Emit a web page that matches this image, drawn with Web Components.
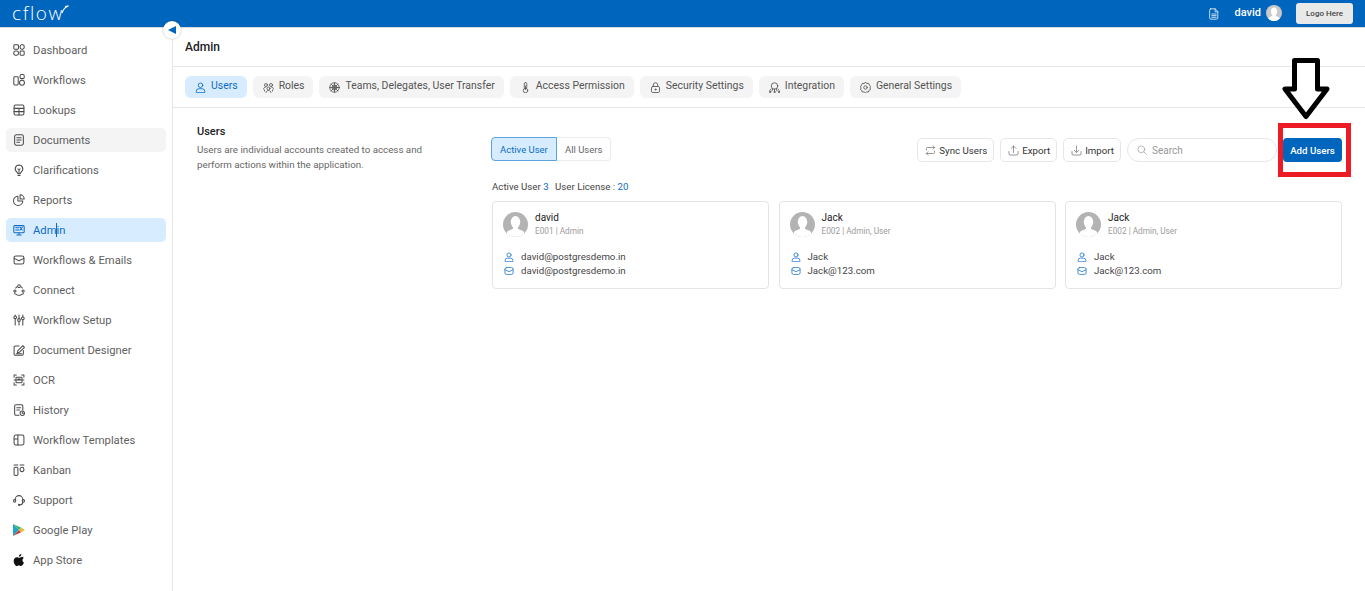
<!DOCTYPE html>
<html>
<head>
<meta charset="utf-8">
<title>Admin</title>
<style>
  html, body { margin: 0; height: 100%; background: #fff; overflow: hidden; }
  body { font-family: Roboto, "Liberation Sans", sans-serif; color: #333; }
</style>
</head>
<body>
<app-shell></app-shell>

<script>
// stroke icons on a 24 box, keyed by name
const ICONS = {
  dashboard: '<rect x="2.500" y="2.500" width="8.500" height="8" rx="1.500"/><rect x="14" y="2.500" width="7.500" height="8" rx="3"/><rect x="2.500" y="14" width="8.500" height="7.500" rx="3"/><rect x="14" y="14" width="7.500" height="7.500" rx="1.500"/>',
  workflows: '<rect x="2.500" y="6" width="8" height="15" rx="1.500"/><rect x="14" y="2" width="7.500" height="7.500" rx="2"/><circle cx="17.500" cy="17" r="4.500"/>',
  lookups: '<rect x="3" y="3" width="18" height="18" rx="2.500"/><path d="M3 9h18M3 15h18M12 9v12"/>',
  documents: '<rect x="4" y="2.500" width="16" height="19" rx="3"/><path d="M8 8h8M8 12h8M8 16h5"/>',
  clarifications: '<path d="M12 3a7 7 0 0 0-4 12.700L10 19h4l2-3.300A7 7 0 0 0 12 3z"/><path d="M10 22h4M12 19v-7l-2-2M12 12l2-2"/>',
  reports: '<path d="M10 5a8.500 8.500 0 1 0 9 9h-9z"/><path d="M14 2.500a7.500 7.500 0 0 1 7.500 7.500H14z"/>',
  admin: '<rect x="2.500" y="4" width="19" height="13" rx="2"/><path d="M8 21h8M12 17v4M6 8h6M6 12h6"/><path d="M14 7l4 5M18 7l-4 5"/>',
  mail: '<rect x="3" y="4.500" width="18" height="15" rx="3.500"/><path d="M3 9l9 4.500L21 9"/>',
  connect: '<circle cx="12" cy="5" r="2.500"/><circle cx="4.500" cy="14" r="2"/><circle cx="19.500" cy="14" r="2"/><path d="M6 8.500A8 8 0 0 1 8 6M18 8.500A8 8 0 0 0 16 6M7 20a8 8 0 0 0 10 0M4 18l1 1.500M20 18l-1 1.500" stroke-dasharray="3 1.500"/>',
  setup: '<path d="M5 10v11M5 3v1M12 15v6M12 3v6M19 12v9M19 3v3"/><circle cx="5" cy="7" r="2.500"/><circle cx="12" cy="12" r="2.500"/><circle cx="19" cy="9" r="2.500"/>',
  designer: '<path d="M20 13v6a2.500 2.500 0 0 1-2.500 2.500h-12A2.500 2.500 0 0 1 3 19V7a2.500 2.500 0 0 1 2.500-2.500H12"/><path d="M9 17l1-4 9-9 3 3-9 9zM7 19h10"/>',
  ocr: '<path d="M3 7V3h4M17 3h4v4M21 17v4h-4M7 21H3v-4"/><rect x="6.500" y="7" width="11" height="10" rx="1.500"/><path d="M3 12h18M10 10h4"/>',
  history: '<path d="M12 21.500H6.500A2.500 2.500 0 0 1 4 19V5a2.500 2.500 0 0 1 2.500-2.500h10A2.500 2.500 0 0 1 19 5v7"/><path d="M8 8h7M8 12h5"/><circle cx="18" cy="18" r="4"/><path d="M18 16v2h2"/>',
  templates: '<rect x="3" y="3" width="18" height="18" rx="3"/><path d="M10 3v18M3 10h7"/>',
  kanban: '<rect x="3" y="7" width="7" height="15" rx="2"/><path d="M3 3h7M14 3h7"/><rect x="14" y="7" width="7" height="8" rx="3.500"/>',
  support: '<path d="M5 13V11a7 7 0 0 1 14 0v2"/><rect x="2" y="11" width="4" height="5" rx="2"/><rect x="18" y="11" width="4" height="5" rx="2"/><path d="M19 16a7 5 0 0 1-6 5"/><circle cx="12" cy="21" r="1"/>',
  user: '<circle cx="12" cy="7.500" r="4.500"/><path d="M3.500 21.500v-2a5 5 0 0 1 5-5h7a5 5 0 0 1 5 5v2z"/>',
  roles: '<circle cx="7" cy="7" r="3"/><circle cx="17" cy="7" r="3"/><circle cx="12" cy="14" r="3"/><path d="M2 15c0-2 2-4 4-4M22 15c0-2-2-4-4-4M7 22c0-2 2-4 5-4s5 2 5 4M4 17v2M20 17v2"/>',
  teams: '<circle cx="12" cy="12" r="9.500"/><circle cx="12" cy="12" r="5"/><path d="M12 2.500v19M2.500 12h19M5 5l14 14M19 5L5 19"/>',
  key: '<rect x="9.500" y="2" width="5" height="12" rx="2.500"/><circle cx="12" cy="18" r="4.500"/><path d="M12 9v7"/>',
  lock: '<rect x="4" y="10" width="16" height="12" rx="2.500"/><path d="M7.500 10V7a4.500 4.500 0 0 1 9 0v3"/><circle cx="12" cy="16" r="1.200"/>',
  integration: '<circle cx="12" cy="9" r="6.500"/><path d="M5 15c-2 1-2.500 3-2.500 4M19 15c2 1 2.500 3 2.500 4M12 15v4M8 15l-1 4M16 15l1 4"/><circle cx="3" cy="21" r="1.300"/><circle cx="21" cy="21" r="1.300"/><circle cx="12" cy="21" r="1.300"/>',
  gear: '<path d="M12 2l3 2 3.500-.3 1 3.300L22 9.500 21 13l1 3-3 1.700-1 3.300-3.500-.3-2.500 2-3-2-3.500.3-1-3.300L2 16l1-3-1-3.500L4.500 7l1-3.300L9 4z"/><circle cx="12" cy="12" r="3.500"/>',
  sync: '<path d="M4 11V8a2 2 0 0 1 2-2h14M17 2.500L20.500 6 17 9.500M20 13v3a2 2 0 0 1-2 2H4M7 14.500L3.500 18 7 21.500"/>',
  upload: '<path d="M12 16V3M7.500 7.500L12 3l4.500 4.500M3 14v5a2 2 0 0 0 2 2h14a2 2 0 0 0 2-2v-5"/>',
  download: '<path d="M12 3v13M7.500 11.500L12 16l4.500-4.500M3 14v5a2 2 0 0 0 2 2h14a2 2 0 0 0 2-2v-5"/>',
  search: '<circle cx="10.500" cy="10.500" r="7.500"/><path d="M16 16l6 6"/>',
  file: '<path d="M6 2.500h8l5 5V19a2.500 2.500 0 0 1-2.500 2.500h-10A2.500 2.500 0 0 1 4 19V5a2.500 2.500 0 0 1 2-2.500z"/><path d="M14 2.500V8h5M8 12h8M8 15h8M8 18h8"/>'
};

class UiIcon extends HTMLElement {
  connectedCallback() {
    const size = this.getAttribute("size") || 12;
    const width = this.getAttribute("stroke") || 1.9;
    this.attachShadow({ mode: "open" }).innerHTML = `
      <style>
        :host { display: inline-flex; flex: none; width: ${size}px; height: ${size}px; }
        svg { width: 100%; height: 100%; display: block; fill: none; stroke: currentColor;
              stroke-width: ${width}; stroke-linecap: round; stroke-linejoin: round; }
      </style>
      <svg viewBox="1 1 22 22">${ICONS[this.getAttribute("name")] || ""}</svg>`;
  }
}
customElements.define("ui-icon", UiIcon);

class AvatarPic extends HTMLElement {
  connectedCallback() {
    const size = this.getAttribute("size") || 25;
    this.attachShadow({ mode: "open" }).innerHTML = `
      <style>
        :host { display: block; flex: none; width: ${size}px; height: ${size}px; }
        svg { display: block; width: 100%; height: 100%; }
      </style>
      <svg viewBox="0 0 50 50">
        <defs><clipPath id="c"><circle cx="25" cy="25" r="25"/></clipPath></defs>
        <circle cx="25" cy="25" r="25" fill="${this.getAttribute("bg") || "#b3b3b3"}"/>
        <g clip-path="url(#c)" fill="#fff">
          <ellipse cx="25" cy="20" rx="9.500" ry="12"/>
          <path d="M20 29h10v4c0 2 9 3 12 7v10H8V40c3-4 12-5 12-7z"/>
        </g>
      </svg>`;
  }
}
customElements.define("avatar-pic", AvatarPic);

class TopBar extends HTMLElement {
  connectedCallback() {
    this.attachShadow({ mode: "open" }).innerHTML = `
      <style>
        :host { display: flex; align-items: center; height: 27px; background: #0065bd; color: #fff;
                padding-left: 12px; border-bottom: 1px solid #d9d9d9; }
        .logo { font: 300 19px/27px "Open Sans", Roboto, sans-serif; letter-spacing: 1.600px;
                height: 27px; position: relative; width: 57px; margin-top: -1px; }
        .right { margin-left: auto; display: flex; align-items: center; padding-right: 12px; }
        .name { font-size: 11px; font-weight: 500; margin: -3px 0 0 14px; }
        avatar-pic { margin-left: 5px; margin-top: -1px; }
        .logo-box { width: 57px; height: 21px; margin-left: 14px; background: #e9e9e9; border-radius: 3px;
                    color: #444; font-size: 8px; font-weight: 500; display: flex; align-items: center; justify-content: center; }
        .flick { position: absolute; left: 42px; top: 4px; width: 15px; height: 10px; }
      </style>
      <div class="logo">cflow
        <svg class="flick" viewBox="0 0 15 10"><path d="M8 9C9 6 11 3 14.500 2L11 2.500" fill="none" stroke="#fff" stroke-width="1.100"/></svg>
      </div>
      <div class="right">
        <ui-icon name="file" size="12" stroke="1.400"></ui-icon>
        <span class="name">david</span>
        <avatar-pic size="16" bg="#c9c9c9"></avatar-pic>
        <div class="logo-box">Logo Here</div>
      </div>`;
  }
}
customElements.define("top-bar", TopBar);

class NavItem extends HTMLElement {
  connectedCallback() {
    const icon = this.getAttribute("icon");
    this.attachShadow({ mode: "open" }).innerHTML = `
      <style>
        :host { display: flex; align-items: center; height: 24px; padding-left: 7px; border-radius: 5px;
                color: #5f5f5f; font-size: 11.250px; gap: 8px; }
        :host([hover]) { background: #f4f4f4; }
        :host([active]) { background: #d8ecff; color: #0a6cc4; }
        .ic { display: inline-flex; width: 12px; height: 12px; color: #4a4a4a; flex: none; }
        :host([active]) .ic { color: #0a6cc4; }
      </style>
      <span class="ic"><slot name="glyph">${icon ? `<ui-icon name="${icon}" size="12"></ui-icon>` : ""}</slot></span>
      <span><slot></slot></span>`;
  }
}
customElements.define("nav-item", NavItem);

class SideBar extends HTMLElement {
  connectedCallback() {
    const items = [
      ["dashboard", "Dashboard"], ["workflows", "Workflows"], ["lookups", "Lookups"],
      ["documents", "Documents", "hover"], ["clarifications", "Clarifications"], ["reports", "Reports"],
      ["admin", 'Adm<i class="caret"></i>in', "active"], ["mail", "Workflows &amp; Emails"], ["connect", "Connect"],
      ["setup", "Workflow Setup"], ["designer", "Document Designer"], ["ocr", "OCR"],
      ["history", "History"], ["templates", "Workflow Templates"], ["kanban", "Kanban"], ["support", "Support"]
    ];
    const rows = items.map(([i, t, s]) => `<nav-item icon="${i}" ${s || ""}>${t}</nav-item>`).join("");
    this.attachShadow({ mode: "open" }).innerHTML = `
      <style>
        :host { display: flex; flex-direction: column; gap: 6px; width: 160px; padding: 10px 6px 0;
                border-right: 1px solid #e6e6e6; flex: none; position: relative; box-sizing: content-box; }
        .toggle { position: absolute; right: -9px; top: -7px; width: 18px; height: 18px; border-radius: 50%;
                  background: #fff; box-shadow: 0 0 2px rgba(0,0,0,.3); display: flex; align-items: center; justify-content: center; }
        .toggle i { width: 0; height: 0; border: 4px solid transparent; border-right: 8px solid #0065bd; border-left: 0; }
        .caret { display: inline-block; width: 1px; height: 14px; background: #0a6cc4; margin: 0 -.5px; vertical-align: -3px; }
      </style>
      <div class="toggle"><i></i></div>
      ${rows}
      <nav-item>Google Play
        <svg slot="glyph" viewBox="0 0 12 12" width="12" height="12">
          <path d="M0 0v12l6-6z" fill="#1fa3c9"/><path d="M0 0l6 6 2.300-2.300z" fill="#3bb273"/>
          <path d="M0 12l6-6 2.300 2.300z" fill="#c4423c"/><path d="M8.300 3.700L12 6 8.300 8.300 6 6z" fill="#e8b93a"/>
        </svg>
      </nav-item>
      <nav-item>App Store
        <svg slot="glyph" viewBox="0 0 12 12" width="12" height="12">
          <path fill="#111" d="M8.500 3.200c-1 0-1.700.6-2.400.6s-1.300-.6-2.300-.6C2.300 3.200.7 4.500.7 7c0 2.300 1.600 5 3 5 .8 0 1.200-.5 2.200-.5s1.300.5 2.200.5c1.200 0 2.300-1.800 2.900-3.400-1.700-.7-2.200-3.300-.2-4.500-.6-.9-1.400-1.400-2.300-1.400zM8.300 0C7 .1 5.800 1.300 6 2.800 7.300 2.800 8.500 1.500 8.300 0z"/>
        </svg>
      </nav-item>`;
  }
}
customElements.define("side-bar", SideBar);

class TabChip extends HTMLElement {
  connectedCallback() {
    this.attachShadow({ mode: "open" }).innerHTML = `
      <style>
        :host { display: flex; align-items: center; height: 22px; padding: 0 9px 0 10px; gap: 5px; border-radius: 6px;
                background: #f4f4f4; color: #555; font-size: 10.450px; white-space: nowrap; }
        :host([active]) { background: #d8ecff; color: #0a6cc4; }
        span { margin-top: -3px; }
      </style>
      <ui-icon name="${this.getAttribute("icon")}" size="11" stroke="1.700"></ui-icon>
      <span><slot></slot></span>`;
  }
}
customElements.define("tab-chip", TabChip);

class ToolButton extends HTMLElement {
  connectedCallback() {
    this.attachShadow({ mode: "open" }).innerHTML = `
      <style>
        :host { display: flex; align-items: center; height: 22px; padding: 0 6px 0 7px; gap: 3px; border: 1px solid #e6e6e6;
                border-radius: 5px; background: #fff; color: #333; font-size: 9.700px; white-space: nowrap; }
        ui-icon { color: #777; }
      </style>
      <ui-icon name="${this.getAttribute("icon")}" size="11" stroke="1.500"></ui-icon>
      <span><slot></slot></span>`;
  }
}
customElements.define("tool-button", ToolButton);

class UserCard extends HTMLElement {
  connectedCallback() {
    const a = n => this.getAttribute(n);
    this.attachShadow({ mode: "open" }).innerHTML = `
      <style>
        :host { display: block; box-sizing: border-box; height: 88px; border: 1px solid #e4e4e4; border-radius: 4px;
                padding: 10px 10px 0; background: #fff; }
        .head { display: flex; gap: 7px; }
        .name { font-size: 10px; color: #222; line-height: 12px; }
        .sub { font-size: 8.250px; color: #9c9c9c; line-height: 10px; margin-top: 2px; }
        .rows { margin-top: 14px; display: flex; flex-direction: column; gap: 2px; }
        .row { display: flex; align-items: center; gap: 7px; font-size: 9.700px; color: #444; line-height: 12px; padding-left: 1px; }
        ui-icon { color: #2f80cf; }
      </style>
      <div class="head">
        <avatar-pic size="25"></avatar-pic>
        <div><div class="name">${a("name")}</div><div class="sub">${a("sub")}</div></div>
      </div>
      <div class="rows">
        <div class="row"><ui-icon name="user" size="10"></ui-icon>${a("login")}</div>
        <div class="row"><ui-icon name="mail" size="10"></ui-icon>${a("mail")}</div>
      </div>`;
  }
}
customElements.define("user-card", UserCard);

class UsersPanel extends HTMLElement {
  connectedCallback() {
    this.attachShadow({ mode: "open" }).innerHTML = `
      <style>
        :host { display: grid; grid-template-columns: 295px 1fr; padding: 17px 23px 0 24px; }
        h3 { margin: 0; font-size: 11px; font-weight: 500; color: #222; line-height: 14px; }
        p { margin: 3px 0 0; font-size: 9.750px; line-height: 15px; color: #666; width: 240px; }
        .side { padding-top: 13px; }
        .bar { display: flex; align-items: flex-start; height: 24px; }
        .seg { display: flex; height: 24px; font-size: 9.500px; margin-left: -1px; margin-top: -1px; }
        .seg div { display: flex; align-items: center; box-sizing: border-box; height: 24px; padding: 0 7px 0 8px; border: 1px solid #ececec; }
        .seg .on { width: 66px; background: #d8ecff; color: #0a6cc4; border-color: #5aa2e0; border-radius: 4px 0 0 4px; }
        .seg .off { width: 54px; color: #666; border-left: 0; border-radius: 0 4px 4px 0; }
        .tools { margin-left: auto; display: flex; align-items: center; gap: 6px; }
        .search { display: flex; align-items: center; gap: 5px; box-sizing: border-box; width: 150px; height: 24px; padding-left: 9px;
                  border: 1px solid #e6e6e6; border-radius: 12px; color: #999; font-size: 10px; }
        .add { display: flex; align-items: center; justify-content: center; width: 59px; height: 24px; border-radius: 4px;
               background: #0065bd; color: #fff; font-size: 9.700px; font-weight: 500; }
        .count { margin-top: 19px; font-size: 9.700px; line-height: 12px; color: #444; }
        .count b { font-weight: 400; color: #0a6cc4; }
        .count span { margin-left: 4px; }
        .cards { display: grid; grid-template-columns: repeat(3, 1fr); gap: 9.500px; margin-top: 8px; }
      </style>
      <div>
        <h3>Users</h3>
        <p>Users are individual accounts created to access and perform actions within the application.</p>
      </div>
      <div class="side">
        <div class="bar">
          <div class="seg"><div class="on">Active User</div><div class="off">All Users</div></div>
          <div class="tools">
            <tool-button icon="sync">Sync Users</tool-button>
            <tool-button icon="upload">Export</tool-button>
            <tool-button icon="download">Import</tool-button>
            <div class="search"><ui-icon name="search" size="10" stroke="1.500"></ui-icon>Search</div>
            <div class="add">Add Users</div>
          </div>
        </div>
        <div class="count">Active User <b>3</b> <span>User License : <b>20</b></span></div>
        <div class="cards">
          <user-card name="david" sub="E001 | Admin" login="david@postgresdemo.in" mail="david@postgresdemo.in"></user-card>
          <user-card name="Jack" sub="E002 | Admin, User" login="Jack" mail="Jack@123.com"></user-card>
          <user-card name="Jack" sub="E002 | Admin, User" login="Jack" mail="Jack@123.com"></user-card>
        </div>
      </div>`;
  }
}
customElements.define("users-panel", UsersPanel);

// red box and arrow are drawn on top of the screenshot, so they sit absolutely
class CallOut extends HTMLElement {
  connectedCallback() {
    this.attachShadow({ mode: "open" }).innerHTML = `
      <style>
        :host { position: absolute; left: 1278px; top: 56px; width: 73px; height: 121px; pointer-events: none; }
        .box { position: absolute; left: 0; top: 67px; width: 73px; height: 54px; box-sizing: border-box; border: 5px solid #ed1c24; }
        svg { position: absolute; left: 3px; top: 1px; overflow: visible; }
      </style>
      <svg width="50" height="64" viewBox="0 0 50 64">
        <path d="M13.500 3.500h23V32H46L25 59.500 4 32h9.500z" fill="#fff" stroke="#000" stroke-width="5" stroke-linejoin="round"/>
      </svg>
      <div class="box"></div>`;
  }
}
customElements.define("call-out", CallOut);

class AppShell extends HTMLElement {
  connectedCallback() {
    this.attachShadow({ mode: "open" }).innerHTML = `
      <style>
        :host { display: flex; flex-direction: column; height: 100vh; position: relative; overflow: hidden; }
        .body { display: flex; flex: 1; min-height: 0; }
        main { flex: 1; min-width: 0; }
        .title { height: 38px; box-sizing: content-box; display: flex; align-items: center; padding-left: 12px;
                 font-size: 12px; font-weight: 500; color: #222; border-bottom: 1px solid #e6e6e6; }
        .title span { margin-top: -1px; }
        .tabs { height: 40px; display: flex; align-items: center; gap: 6px; padding-left: 12px; border-bottom: 1px solid #e6e6e6; }
      </style>
      <top-bar></top-bar>
      <div class="body">
        <side-bar></side-bar>
        <main>
          <div class="title"><span>Admin</span></div>
          <div class="tabs">
            <tab-chip icon="user" active>Users</tab-chip>
            <tab-chip icon="roles">Roles</tab-chip>
            <tab-chip icon="teams">Teams, Delegates, User Transfer</tab-chip>
            <tab-chip icon="key">Access Permission</tab-chip>
            <tab-chip icon="lock">Security Settings</tab-chip>
            <tab-chip icon="integration">Integration</tab-chip>
            <tab-chip icon="gear">General Settings</tab-chip>
          </div>
          <users-panel></users-panel>
        </main>
      </div>
      <call-out></call-out>`;
  }
}
customElements.define("app-shell", AppShell);
</script>
</body>
</html>
